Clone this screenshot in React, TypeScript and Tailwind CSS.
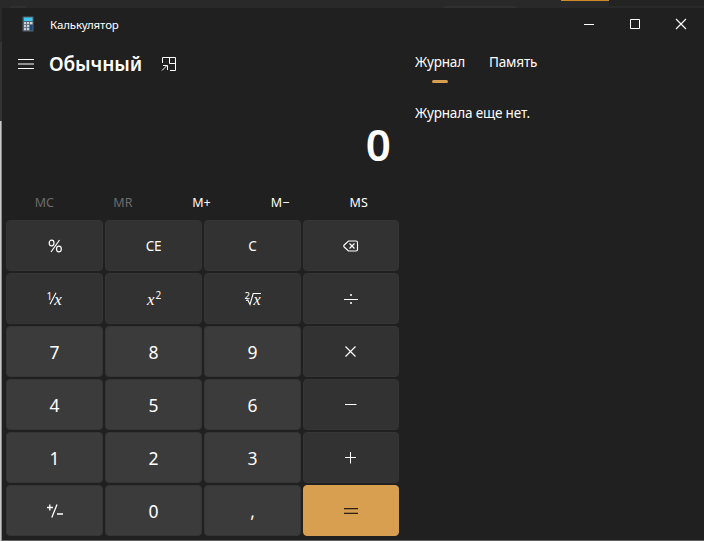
import type { ReactNode } from "react";

const memory = [
  { label: "MC", off: true },
  { label: "MR", off: true },
  { label: "M+" },
  { label: "M−" },
  { label: "MS" },
];

const Glyph = ({ children }: { children: ReactNode }) => (
  <svg width="24" height="24" viewBox="0 0 24 24" fill="none" stroke="#fff" strokeWidth="1">
    {children}
  </svg>
);

const serif = "'Liberation Serif', serif";
const sans = "'Noto Sans', sans-serif";

const Percent = () => (
  <Glyph>
    <ellipse cx="8.6" cy="9" rx="2.4" ry="2.8" strokeWidth="1.2" />
    <ellipse cx="15.9" cy="15" rx="2.4" ry="2.8" strokeWidth="1.2" />
    <path d="M8 18 16.5 6" strokeWidth="1.2" />
  </Glyph>
);

const Reciprocal = () => (
  <Glyph>
    <path d="M7 17.3 13 5.7" strokeWidth="1.1" />
    <text x="3.6" y="12.5" fontSize="10" fontFamily={sans} fill="#fff" stroke="none">1</text>
    <text x="11.3" y="17.5" fontSize="17" fontStyle="italic" fontFamily={serif} fill="#fff" stroke="none">x</text>
  </Glyph>
);

const Square = () => (
  <Glyph>
    <text x="5" y="17.5" fontSize="17" fontStyle="italic" fontFamily={serif} fill="#fff" stroke="none">x</text>
    <text x="13.6" y="12" fontSize="10" fontFamily={sans} fill="#fff" stroke="none">2</text>
  </Glyph>
);

const Root = () => (
  <Glyph>
    <text x="3.4" y="12.2" fontSize="9.5" fontFamily={sans} fill="#fff" stroke="none">2</text>
    <path d="M5 13.5 6.8 13 9 17.5 12.2 6.5H20" strokeWidth="1.1" />
    <text x="12.4" y="17.5" fontSize="16" fontStyle="italic" fontFamily={serif} fill="#fff" stroke="none">x</text>
  </Glyph>
);

const Backspace = () => (
  <Glyph>
    <path d="M9.5 7H17a1.5 1.5 0 0 1 1.5 1.5v7A1.5 1.5 0 0 1 17 17H9.5L5.2 13a1.4 1.4 0 0 1 0-2ZM10.5 9.5l5 5m0-5-5 5" strokeWidth="1.2" />
  </Glyph>
);

const Divide = () => (
  <Glyph>
    <path d="M5 12.5h14" />
    <path d="M11 7h2v2h-2ZM11 15h2v2h-2Z" fill="#ccc" stroke="none" />
  </Glyph>
);

const Sign = () => (
  <Glyph>
    <path d="M4 8.5h6M6.8 5.5v6M8.8 18.5l5.2-13M14 15h6" strokeWidth="1.3" />
  </Glyph>
);

type Key = { id: string; face: ReactNode; kind?: "num" | "eq" };

const digit = (d: string): Key => ({
  id: d,
  kind: "num",
  face: <span className="pt-px text-[17.5px] leading-6">{d}</span>,
});

const keys: Key[] = [
  { id: "percent", face: <Percent /> },
  { id: "ce", face: <span className="pt-px text-[13.5px] tracking-[-0.2px]">CE</span> },
  { id: "c", face: <span className="pt-px text-[13.5px]">C</span> },
  { id: "back", face: <Backspace /> },
  { id: "reciprocal", face: <Reciprocal /> },
  { id: "square", face: <Square /> },
  { id: "root", face: <Root /> },
  { id: "divide", face: <Divide /> },
  digit("7"),
  digit("8"),
  digit("9"),
  { id: "times", face: <Glyph><path d="m6.5 6.5 10 10m0-10-10 10" strokeWidth="1.15" /></Glyph> },
  digit("4"),
  digit("5"),
  digit("6"),
  { id: "minus", face: <Glyph><path d="M6 11.5h11.5" /></Glyph> },
  digit("1"),
  digit("2"),
  digit("3"),
  { id: "plus", face: <Glyph><path d="M6 11.5h11M11.5 6v11.5" /></Glyph> },
  { id: "sign", kind: "num", face: <Sign /> },
  digit("0"),
  digit(","),
  { id: "equals", kind: "eq", face: <Glyph><path d="M5 9.5h14M5 14.5h14" stroke="#2e2213" /><path d="M5 10.5h14M5 13.5h14" stroke="#a47a3f" /></Glyph> },
];

const tone = {
  op: "bg-[#323232] border-[#353535]",
  num: "bg-[#3b3b3b] border-[#353535]",
  eq: "bg-[#d89f50] border-[#d89f50]",
};

const AppIcon = () => (
  <svg width="12" height="16" viewBox="0 0 12 16">
    <rect x="0.5" y="0.5" width="11" height="15" rx="0.5" fill="#53616d" />
    <rect x="2" y="1.5" width="8.5" height="3.5" fill="#3fc8f4" />
    <path d="M2 6h2.2v2.2H2ZM5 6h2.2v2.2H5ZM8 6h2.5v2.2H8ZM2 9h2.2v2.2H2ZM5 9h2.2v2.2H5ZM2 12h2.2v2.2H2ZM5 12h2.2v2.2H5Z" fill="#cbd2d8" />
    <rect x="8" y="9" width="2.5" height="5.2" fill="#134b87" />
  </svg>
);

export default function App() {
  return (
    <div className="relative flex h-[541px] w-[704px] flex-col overflow-hidden bg-[#202020] font-['Noto_Sans',sans-serif] text-white">
      <div className="flex h-2 shrink-0 bg-[#292929]">
        <div className="mt-1.5 ml-2.5 h-0.5 w-4 bg-[#303030]" />
        <div className="mt-1.5 ml-[418px] h-0.5 w-[72px] bg-[#303030]" />
        <div className="ml-[45px] h-px w-12 bg-[#d08a2a]" />
        <div className="h-1.5 flex-1 bg-[#232323]" />
      </div>
      <div className="flex min-h-0 flex-1">
        <div className="flex w-0.5 flex-col">
          <div className="h-[34px] bg-[#292929]" />
          <div className="h-[79px] bg-[#343434]" />
          <div className="flex flex-1">
            <div className="w-px bg-[#c8c8c8]" />
            <div className="w-px bg-[#8b8b8b]" />
          </div>
        </div>
        <div className="flex w-[702px] flex-col border-b border-[#606060]">
          <header className="flex h-8 items-center pl-5">
            <AppIcon />
            <span className="ml-4 flex-1 pt-px text-[11.5px] leading-4 tracking-[-0.15px]">Калькулятор</span>
            <svg width="138" height="32" viewBox="0 0 138 32" fill="none" stroke="#fff">
              <path d="M18 16.5h10M64.5 11.5h9v9h-9Z" />
              <path d="m110 11 10 10m0-10-10 10" strokeWidth="1.1" />
            </svg>
          </header>
          <div className="flex min-h-0 flex-1">
            <main className="flex w-[397px] flex-col pl-1">
              <div className="flex h-12 items-center pl-3">
                <svg width="16" height="16" viewBox="0 0 16 16" fill="none" stroke="#fff">
                  <path d="M0 3.5h16M0 12.5h16" />
                  <path d="M0 8h16" strokeWidth="1.2" stroke="#ddd" />
                </svg>
                <h1 className="ml-[15px] w-[92px] text-[19px] leading-6 font-semibold tracking-[-0.1px] whitespace-nowrap">Обычный</h1>
                <svg className="ml-5" width="16" height="16" viewBox="0 0 16 16" fill="none" stroke="#fff">
                  <path d="M1.5 7V1.5h13v13H9M8.5 1.5v6h6M1 14.5l5-5M2 9.5h4.5v4.5" />
                </svg>
              </div>
              <div className="flex h-[96px] items-center justify-end pt-[15px] pr-2 text-[44px] leading-none font-semibold">0</div>
              <div className="flex h-9 items-center pt-0.5">
                {memory.map((m) => (
                  <span key={m.label} className={`-ml-px mr-px w-[79px] text-center text-[12.5px] ${m.off ? "text-[#6c6c6c]" : "text-white"}`}>
                    {m.label}
                  </span>
                ))}
              </div>
              <div className="grid grid-cols-[97px_97px_97px_96px] auto-rows-[51px] gap-0.5">
                {keys.map((k) => (
                  <button key={k.id} className={`flex items-center justify-center rounded-[4px] border ${tone[k.kind ?? "op"]}`}>
                    {k.face}
                  </button>
                ))}
              </div>
            </main>
            <aside className="flex flex-1 flex-col pt-3 pl-4 text-[13.5px] leading-5 tracking-[-0.15px]">
              <div className="flex gap-6">
                <div className="flex w-[50px] flex-col items-center">
                  <span>Журнал</span>
                  <span className="mt-2 h-[3px] w-4 rounded-full bg-[#d89f50]" />
                </div>
                <span>Память</span>
              </div>
              <p className="mt-5">Журнала еще нет.</p>
            </aside>
          </div>
        </div>
      </div>
    </div>
  );
}
